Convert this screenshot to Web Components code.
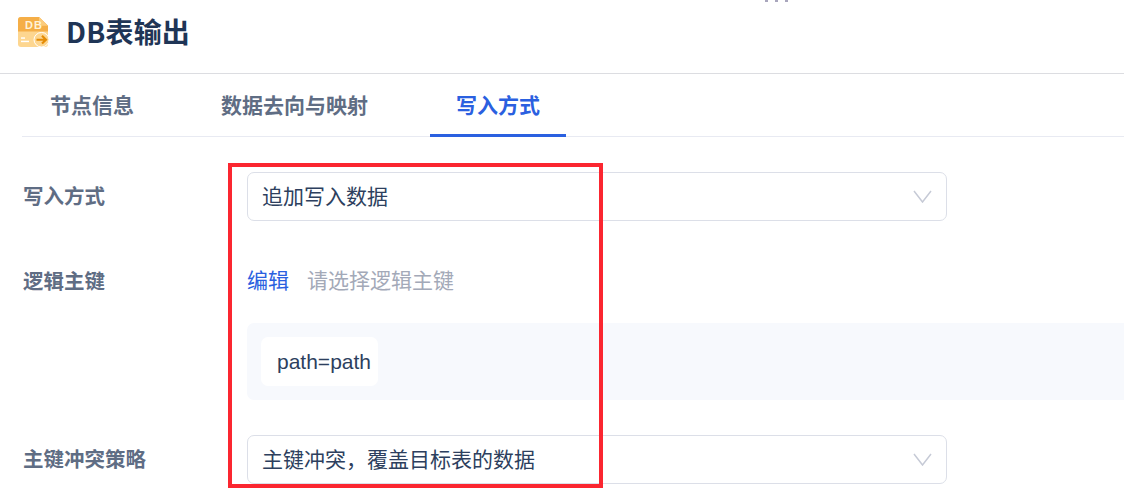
<!DOCTYPE html>
<html lang="zh">
<head>
<meta charset="utf-8">
<title>DB表输出</title>
<style>
  html, body {
    margin: 0;
    height: 504px;
    overflow: hidden;
    background: #fff;
    font-family: "Noto Sans CJK SC", "Liberation Sans", sans-serif;
    color: #2d3f5e;
  }
  .page { position: relative; width: 1124px; height: 504px; overflow: hidden; }
</style>
</head>
<body>
<div class="page">
  <node-header>DB表输出</node-header>
  <node-tabs>
    <tab-item>节点信息</tab-item>
    <tab-item>数据去向与映射</tab-item>
    <tab-item active>写入方式</tab-item>
  </node-tabs>
  <write-form>
    <form-label>写入方式</form-label>
    <form-select>追加写入数据</form-select>

    <form-label>逻辑主键</form-label>
    <key-editor placeholder="请选择逻辑主键">
      <key-tag>path=path</key-tag>
    </key-editor>

    <form-label>主键冲突策略</form-label>
    <form-select>主键冲突，覆盖目标表的数据</form-select>
  </write-form>
  <red-mark></red-mark>
</div>

<script>
// Small helper so each component only has to declare its markup
function defineEl(name, html) {
  customElements.define(name, class extends HTMLElement {
    constructor() {
      super();
      this.attachShadow({ mode: "open" });
      this.shadowRoot.innerHTML = html;
    }
  });
}

defineEl("node-header", `
  <style>
    :host {
      display: flex;
      align-items: center;
      gap: 17px;
      height: 74px;
      padding: 0 0 10px 18px;
      box-sizing: border-box;
      border-bottom: 1px solid #dcdde1;
    }
    svg { width: 31px; height: 30px; display: block; flex: none; }
    h1 {
      margin: -2px 0 0;
      font-size: 28px;
      line-height: 36px;
      font-weight: 700;
      letter-spacing: 0.2px;
      color: #1f3556;
    }
    .stray { position: absolute; left: 765px; top: 0; display: flex; gap: 7px; }
    .stray i { display: block; width: 3px; height: 2px; background: #a9a6bd; }
  </style>
  <svg viewBox="0 0 31 31" preserveAspectRatio="none">
    <path d="M3 0H21L30 9V28a3 3 0 0 1-3 3H3a3 3 0 0 1-3-3V3a3 3 0 0 1 3-3Z" fill="#fdd690"/>
    <path d="M3 0H21L30 9V15H0V3a3 3 0 0 1 3-3Z" fill="#f5ae47"/>
    <path d="M21 0L30 9H23a2 2 0 0 1-2-2Z" fill="#fbcb7c"/>
    <text x="7" y="12.5" font-family="Liberation Sans, sans-serif" font-size="11" font-weight="700" letter-spacing="1.2" fill="#fff2d8">DB</text>
    <rect x="3" y="21" width="4" height="1.5" fill="#fff"/>
    <rect x="3" y="24.5" width="8" height="1.5" fill="#fff"/>
    <circle cx="23.5" cy="23.5" r="7.5" fill="#fdd690" stroke="#fff" stroke-width="1"/>
    <path d="M18.5 23.5H27.5M24 19.5L28 23.5L24 27.5" fill="none" stroke="#e58c05" stroke-width="2.2"/>
  </svg>
  <h1><slot></slot></h1>
  <div class="stray"><i></i><i></i><i></i></div>
`);

defineEl("node-tabs", `
  <style>
    :host {
      display: flex;
      gap: 35px;
      height: 63px;
      margin-left: 22px;
      padding-left: 2px;
      box-sizing: border-box;
      border-bottom: 1px solid #e8eaf2;
    }
  </style>
  <slot></slot>
`);

defineEl("tab-item", `
  <style>
    :host {
      display: block;
      height: 63px;
      box-sizing: border-box;
      padding: 0 26px;
      font-size: 21px;
      line-height: 61px;
      font-weight: 700;
      color: #5f6d84;
      white-space: nowrap;
    }
    :host([active]) {
      margin-left: 1px;
      color: #2a60e0;
      border-bottom: 3px solid #2a60e0;
    }
  </style>
  <slot></slot>
`);

defineEl("write-form", `
  <style>
    :host {
      display: grid;
      grid-template-columns: 224px 1fr;
      padding: 35px 0 0 23px;
      row-gap: 36px;
      align-items: start;
    }
  </style>
  <slot></slot>
`);

defineEl("form-label", `
  <style>
    :host {
      display: block;
      font-size: 20.5px;
      line-height: 47px;
      font-weight: 700;
      color: #5f6d84;
      white-space: nowrap;
    }
  </style>
  <slot></slot>
`);

defineEl("form-select", `
  <style>
    :host {
      display: flex;
      align-items: center;
      justify-content: space-between;
      width: 700px;
      height: 49px;
      box-sizing: border-box;
      padding: 0 14px;
      border: 1px solid #dcdfe8;
      border-radius: 7px;
      font-size: 21px;
      color: #2d3f5e;
      background: #fff;
    }
    span { padding-bottom: 4px; }
    svg { width: 19px; height: 13px; display: block; }
  </style>
  <span><slot></slot></span>
  <svg viewBox="0 0 19 13"><path d="M1 1L9.5 12L18 1" fill="none" stroke="#c6cad6" stroke-width="1.5"/></svg>
`);

customElements.define("key-editor", class extends HTMLElement {
  constructor() {
    super();
    this.attachShadow({ mode: "open" });
  }

  connectedCallback() {
    const placeholder = this.getAttribute("placeholder") || "";
    this.shadowRoot.innerHTML = `
      <style>
        :host { display: block; margin-bottom: -1px; }
        .line {
          display: flex;
          gap: 18px;
          height: 49px;
          box-sizing: border-box;
          padding-bottom: 6px;
          align-items: center;
          font-size: 21px;
        }
        .edit { color: #2a60e0; }
        .hint { color: #a3a9b8; }
        .box {
          margin-top: 17px;
          height: 77px;
          box-sizing: border-box;
          padding: 14px;
          background: #f7f9fd;
          border-radius: 7px 0 0 7px;
        }
      </style>
      <div class="line"><span class="edit">编辑</span><span class="hint">${placeholder}</span></div>
      <div class="box"><slot></slot></div>
    `;
  }
});

defineEl("key-tag", `
  <style>
    :host {
      display: inline-block;
      height: 49px;
      box-sizing: border-box;
      padding: 0 7px 0 16px;
      background: #fff;
      border-radius: 7px;
      font-family: "Liberation Sans", sans-serif;
      font-size: 21px;
      line-height: 49px;
      color: #2d3f5e;
    }
  </style>
  <slot></slot>
`);

defineEl("red-mark", `
  <style>
    :host {
      position: absolute;
      left: 228px;
      top: 163px;
      width: 375px;
      height: 325px;
      box-sizing: border-box;
      border: 4px solid #fb2630;
      pointer-events: none;
    }
  </style>
`);
</script>
</body>
</html>
